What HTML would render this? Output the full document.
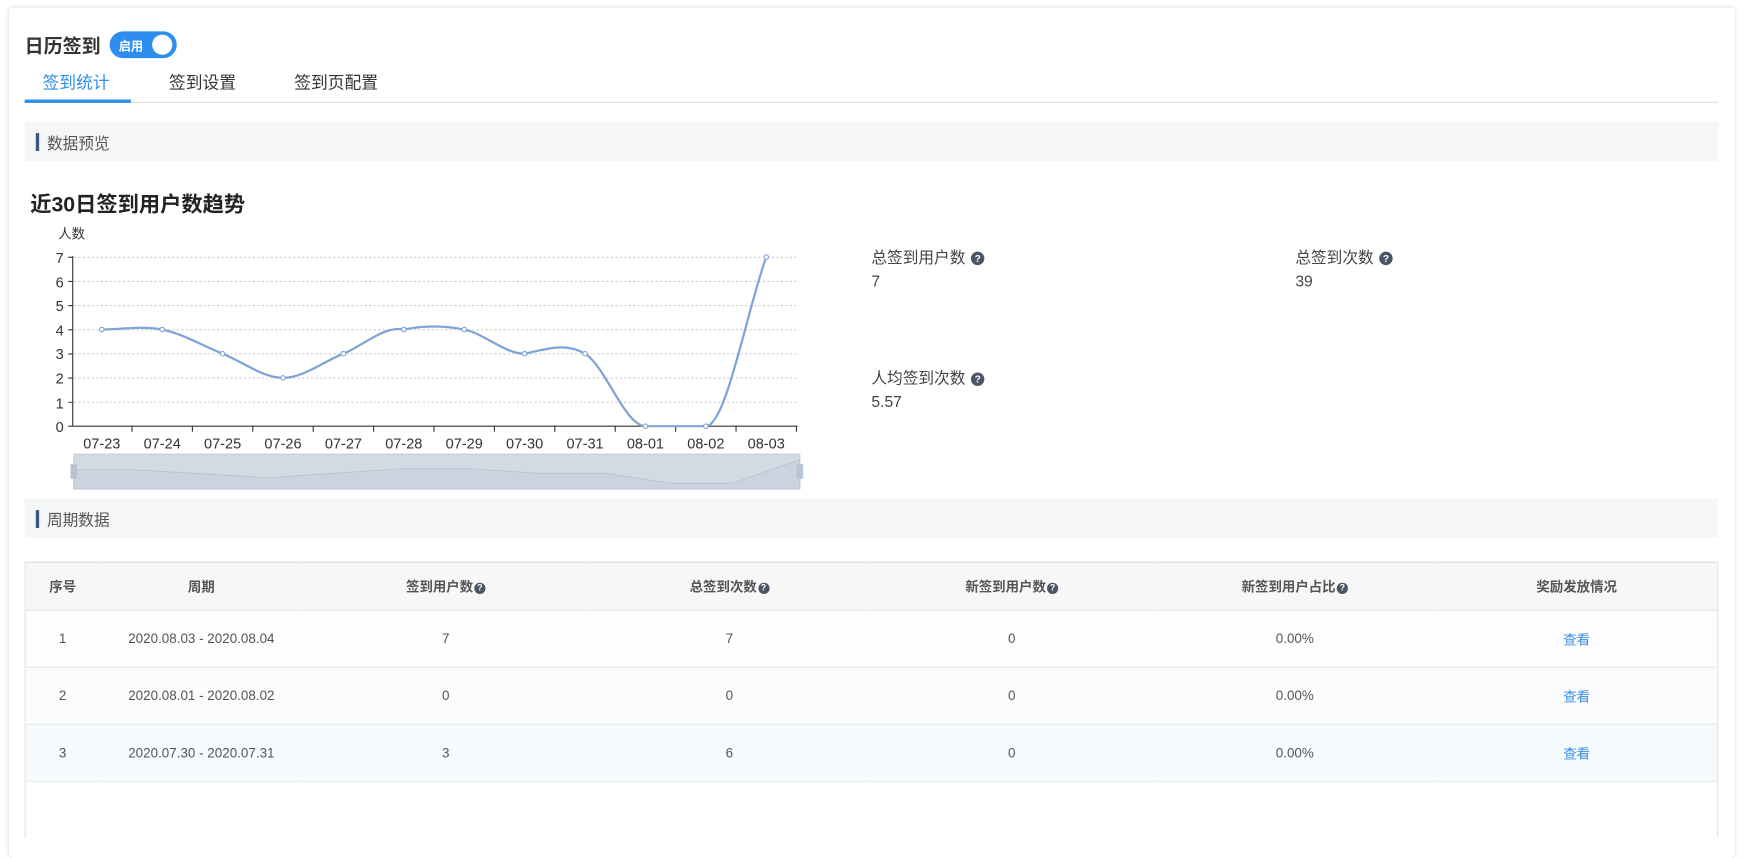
<!DOCTYPE html>
<html><head><meta charset="utf-8"><style>
html,body{margin:0;padding:0;background:#fff;width:1745px;height:800px;overflow:hidden;}
body{font-family:"Liberation Sans","Noto Sans CJK SC",sans-serif;color:#333;}
#w{position:absolute;left:0;top:0;width:1560px;height:716px;transform:scale(1.1186);transform-origin:0 0;}
.a{position:absolute;white-space:nowrap;}
.card{position:absolute;left:8px;top:7px;width:1543px;height:760px;background:#fff;border-radius:4px;box-shadow:0 0 4px rgba(0,0,0,.15);}
.sec{position:absolute;left:22px;width:1514px;height:35px;background:#f5f6f8;}
.sec i{position:absolute;left:10px;top:10px;width:3px;height:16px;background:#3f5582;}
.sec span{position:absolute;left:20px;top:9px;font-size:14px;color:#555;}
.q{display:inline-block;width:12px;height:12px;border-radius:50%;background:#4a5568;color:#fff;font-size:9px;line-height:12px;text-align:center;font-weight:bold;vertical-align:1px;margin-left:5px;}
.qs{width:10px;height:10px;line-height:10px;font-size:8px;margin-left:1px;}
table{position:absolute;left:22px;top:502px;width:1514px;border-collapse:collapse;font-size:12px;color:#555;border-left:1px solid #e5e5e5;border-right:1px solid #e5e5e5;}
th{height:42px;padding:0;background:#f7f7f7;font-weight:bold;border-top:1px solid #ddd;border-bottom:1px solid #e5e5e5;}
td{height:50px;padding:0;text-align:center;border-bottom:1px solid #e8e8e8;}
td a{color:#3a8ee6;}
</style></head><body><div id="w">
<div class="card"></div>
<div class="a" style="left:22px;top:27px;font-size:17px;font-weight:bold;color:#333">日历签到</div>
<div class="a" style="left:98px;top:28px;width:60px;height:24px;border-radius:12px;background:#2e8ef0;">
<span class="a" style="left:8px;top:5px;color:#fff;font-size:11px;font-weight:bold">启用</span>
<span class="a" style="left:38px;top:3px;width:18px;height:18px;border-radius:50%;background:#fff"></span></div>
<div class="a" style="left:38px;top:63px;font-size:15px;color:#2e8ef0">签到统计</div>
<div class="a" style="left:151px;top:63px;font-size:15px;color:#333">签到设置</div>
<div class="a" style="left:263px;top:63px;font-size:15px;color:#333">签到页配置</div>
<div class="a" style="left:22px;top:91px;width:1514px;height:1px;background:#ddd"></div>
<div class="a" style="left:22px;top:89px;width:95px;height:3px;background:#2e8ef0"></div>
<div class="sec" style="top:109px"><i></i><span>数据预览</span></div>
<div class="a" style="left:27px;top:168px;font-size:19px;font-weight:bold;color:#222">近30日签到用户数趋势</div>
<svg class="a" style="left:0;top:195px" width="760" height="250" viewBox="0 195 760 250" font-family="Liberation Sans,Noto Sans CJK SC,sans-serif">
<text x="52" y="213" font-size="12" fill="#333">人数</text>
<g stroke="#ccc" stroke-dasharray="2,2">
<line x1="66" y1="230" x2="712" y2="230"/><line x1="66" y1="251.6" x2="712" y2="251.6"/><line x1="66" y1="273.2" x2="712" y2="273.2"/><line x1="66" y1="294.8" x2="712" y2="294.8"/><line x1="66" y1="316.4" x2="712" y2="316.4"/><line x1="66" y1="338" x2="712" y2="338"/><line x1="66" y1="359.6" x2="712" y2="359.6"/></g>
<g stroke="#333"><line x1="65" y1="229" x2="65" y2="381"/><line x1="65" y1="381" x2="713" y2="381"/>
<line x1="61" y1="230" x2="65" y2="230"/><line x1="61" y1="251.6" x2="65" y2="251.6"/><line x1="61" y1="273.2" x2="65" y2="273.2"/><line x1="61" y1="294.8" x2="65" y2="294.8"/><line x1="61" y1="316.4" x2="65" y2="316.4"/><line x1="61" y1="338" x2="65" y2="338"/><line x1="61" y1="359.6" x2="65" y2="359.6"/><line x1="61" y1="381" x2="65" y2="381"/>
<line x1="118" y1="381" x2="118" y2="386"/><line x1="172" y1="381" x2="172" y2="386"/><line x1="226" y1="381" x2="226" y2="386"/><line x1="280" y1="381" x2="280" y2="386"/><line x1="334" y1="381" x2="334" y2="386"/><line x1="388" y1="381" x2="388" y2="386"/><line x1="442" y1="381" x2="442" y2="386"/><line x1="496" y1="381" x2="496" y2="386"/><line x1="550" y1="381" x2="550" y2="386"/><line x1="604" y1="381" x2="604" y2="386"/><line x1="658" y1="381" x2="658" y2="386"/><line x1="712" y1="381" x2="712" y2="386"/></g>
<g font-size="13" fill="#333" text-anchor="end"><text x="57" y="235">7</text><text x="57" y="257">6</text><text x="57" y="278">5</text><text x="57" y="300">4</text><text x="57" y="321">3</text><text x="57" y="343">2</text><text x="57" y="365">1</text><text x="57" y="386">0</text></g>
<g font-size="13" fill="#333" text-anchor="middle"><text x="91" y="401">07-23</text><text x="145" y="401">07-24</text><text x="199" y="401">07-25</text><text x="253" y="401">07-26</text><text x="307" y="401">07-27</text><text x="361" y="401">07-28</text><text x="415" y="401">07-29</text><text x="469" y="401">07-30</text><text x="523" y="401">07-31</text><text x="577" y="401">08-01</text><text x="631" y="401">08-02</text><text x="685" y="401">08-03</text></g>
<path d="M91,294.6 C109,294.6 127,291 145,294.6 C163,298.2 181,309 199,316.2 C217,323.4 235,337.8 253,337.8 C271,337.8 289,323.4 307,316.2 C325,309 343,291 361,294.6 C379,291 397,291 415,294.6 C433,298.2 451,316.2 469,316.2 C487,312.6 505,305.4 523,316.2 C541,327 559,381 577,381 L631,381 C649,381 667,280 685,229.8" fill="none" stroke="#7ea3d6" stroke-width="2"/>
<g fill="#fff" stroke="#7ea3d6" stroke-width="1"><circle cx="91" cy="294.6" r="2"/><circle cx="145" cy="294.6" r="2"/><circle cx="199" cy="316.2" r="2"/><circle cx="253" cy="337.8" r="2"/><circle cx="307" cy="316.2" r="2"/><circle cx="361" cy="294.6" r="2"/><circle cx="415" cy="294.6" r="2"/><circle cx="469" cy="316.2" r="2"/><circle cx="523" cy="316.2" r="2"/><circle cx="577" cy="381" r="2"/><circle cx="631" cy="381" r="2"/><circle cx="685" cy="229.8" r="2"/></g>
<rect x="66" y="406" width="649" height="31" fill="#d3dae4" stroke="#c8d0da"/>
<path d="M66,420 L120,420 L240,427 L360,419 L420,419 L480,423 L540,423 L600,432 L655,432 L715,411 L715,437 L66,437Z" fill="#cbd3de" stroke="#b8c2cf" stroke-width="0.8"/>
<rect x="63" y="415" width="6" height="13" fill="#b7c3d4"/><rect x="712" y="415" width="6" height="13" fill="#b7c3d4"/>
</svg>
<div class="a" style="left:779px;top:220px;font-size:14px;color:#444">总签到用户数<span class="q">?</span></div>
<div class="a" style="left:779px;top:243px;font-size:14px;color:#444">7</div>
<div class="a" style="left:1158px;top:220px;font-size:14px;color:#444">总签到次数<span class="q">?</span></div>
<div class="a" style="left:1158px;top:243px;font-size:14px;color:#444">39</div>
<div class="a" style="left:779px;top:328px;font-size:14px;color:#444">人均签到次数<span class="q">?</span></div>
<div class="a" style="left:779px;top:351px;font-size:14px;color:#444">5.57</div>
<div class="sec" style="top:446px"><i></i><span>周期数据</span></div>
<table>
<tr><th style="width:66px">序号</th><th style="width:182px">周期</th><th style="width:255px">签到用户数<span class="q qs">?</span></th><th style="width:252px">总签到次数<span class="q qs">?</span></th><th style="width:253px">新签到用户数<span class="q qs">?</span></th><th style="width:253px">新签到用户占比<span class="q qs">?</span></th><th>奖励发放情况</th></tr>
<tr style="background:#fdfdfd"><td>1</td><td>2020.08.03 - 2020.08.04</td><td>7</td><td>7</td><td>0</td><td>0.00%</td><td><a>查看</a></td></tr>
<tr style="background:#fbfcfe"><td>2</td><td>2020.08.01 - 2020.08.02</td><td>0</td><td>0</td><td>0</td><td>0.00%</td><td><a>查看</a></td></tr>
<tr style="background:#f5fafd"><td>3</td><td>2020.07.30 - 2020.07.31</td><td>3</td><td>6</td><td>0</td><td>0.00%</td><td><a>查看</a></td></tr>
<tr><td style="border:none"></td><td style="border:none"></td><td style="border:none"></td><td style="border:none"></td><td style="border:none"></td><td style="border:none"></td><td style="border:none"></td></tr>
</table>
</div></body></html>
